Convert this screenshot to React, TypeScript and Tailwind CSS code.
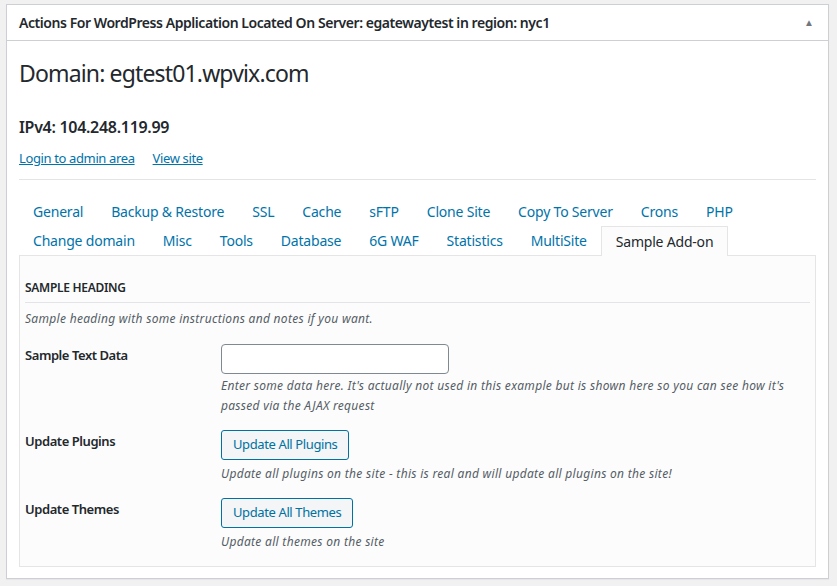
import { useState } from 'react';

const ROW_ONE = ['General', 'Backup & Restore', 'SSL', 'Cache', 'sFTP', 'Clone Site', 'Copy To Server', 'Crons', 'PHP'];
const ROW_TWO = ['Change domain', 'Misc', 'Tools', 'Database', '6G WAF', 'Statistics', 'MultiSite', 'Sample Add-on'];

const font = { fontFamily: '"Noto Sans", "Open Sans", sans-serif' };

function Tab({ label, active, onClick }: { label: string; active: boolean; onClick: () => void }) {
  return (
    <button
      onClick={onClick}
      className={`h-[29px] px-[14px] text-[14px] leading-[19px] tracking-[-0.2px] ${
        active
          ? 'relative z-10 -mb-px h-[30px] border border-b-0 border-[#e5e5e5] bg-[#fcfcfc] text-[#23282d]'
          : 'text-[#0073aa]'
      }`}
    >
      {label}
    </button>
  );
}

export default function App() {
  const [active, setActive] = useState('Sample Add-on');
  const [sample, setSample] = useState('');

  return (
    <div className="min-h-[586px] bg-[#f1f1f1] pt-[4px] pl-[6px] pr-[8px] text-[#23282d]" style={font}>
      <div className="border border-[#ccd0d4] bg-white shadow-[0_1px_1px_rgba(0,0,0,0.04)]">
        {/* Header */}
        <div className="flex h-[36px] items-center justify-between border-b border-[#ccd0d4] pl-[12px] pr-[14px]">
          <h2 className="text-[14px] font-semibold tracking-[-0.44px]">
            Actions For WordPress Application Located On Server: egatewaytest in region: nyc1
          </h2>
          <span className="text-[10px] text-[#72777c]">▲</span>
        </div>

        <div className="px-[12px] pb-[11px]">
          <h1 className="mt-[18px] text-[23px] leading-[29px] font-normal tracking-[-0.85px]">Domain: egtest01.wpvix.com</h1>
          <h3 className="mt-[29px] text-[16px] leading-[20px] font-semibold tracking-[-0.3px]">IPv4: 104.248.119.99</h3>

          <div className="mt-[12px] flex gap-[18px] text-[13px] leading-[18px] tracking-[-0.37px]">
            <a href="#" className="text-[#0073aa] underline">Login to admin area</a>
            <a href="#" className="text-[#0073aa] underline">View site</a>
          </div>

          <hr className="mt-[12px] border-[#e2e4e7]" />

          {/* Tabs */}
          <div className="mt-[17px] flex flex-wrap">
            {ROW_ONE.map(t => (
              <Tab key={t} label={t} active={active === t} onClick={() => setActive(t)} />
            ))}
            <div className="basis-full" />
            {ROW_TWO.map(t => (
              <Tab key={t} label={t} active={active === t} onClick={() => setActive(t)} />
            ))}
          </div>

          {/* Panel */}
          <div className="border border-[#e5e5e5] bg-[#fcfcfc] px-[5px] pt-[23px] pb-[14px]">
            <h4 className="border-b border-[#e2e4e7] pb-[5px] text-[12px] leading-[18px] font-semibold uppercase tracking-[-0.3px]">
              Sample Heading
            </h4>
            <p className="mt-[7px] text-[12px] leading-[18px] italic tracking-[0.3px] text-[#555d66]">
              Sample heading with some instructions and notes if you want.
            </p>

            <div className="mt-[16px] grid grid-cols-[196px_1fr] gap-y-[14px] text-[13px]">
              <div className="pt-[2px] font-semibold leading-[18px] tracking-[-0.44px]">Sample Text Data</div>
              <div>
                <input
                  value={sample}
                  onChange={e => setSample(e.target.value)}
                  className="h-[30px] w-[228px] rounded-[4px] border border-[#7e8993] bg-white px-2 text-[13px]"
                />
                <p className="mt-[2px] text-[12px] leading-[20px] italic tracking-[0.3px] text-[#555d66]">
                  Enter some data here. It's actually not used in this example but is shown here so you can see how it's passed via the AJAX request
                </p>
              </div>

              <div className="pt-[2px] font-semibold leading-[18px] tracking-[-0.44px]">Update Plugins</div>
              <div>
                <button className="h-[30px] rounded-[3px] border border-[#0071a1] bg-[#f3f5f6] px-[11px] text-[13px] tracking-[-0.39px] text-[#0071a1]">
                  Update All Plugins
                </button>
                <p className="mt-[4px] text-[12px] leading-[20px] italic tracking-[0.3px] text-[#555d66]">
                  Update all plugins on the site - this is real and will update all plugins on the site!
                </p>
              </div>

              <div className="pt-[2px] font-semibold leading-[18px] tracking-[-0.44px]">Update Themes</div>
              <div>
                <button className="h-[30px] rounded-[3px] border border-[#0071a1] bg-[#f3f5f6] px-[11px] text-[13px] tracking-[-0.39px] text-[#0071a1]">
                  Update All Themes
                </button>
                <p className="mt-[4px] text-[12px] leading-[20px] italic tracking-[0.3px] text-[#555d66]">
                  Update all themes on the site
                </p>
              </div>
            </div>
          </div>
        </div>
      </div>
    </div>
  );
}
